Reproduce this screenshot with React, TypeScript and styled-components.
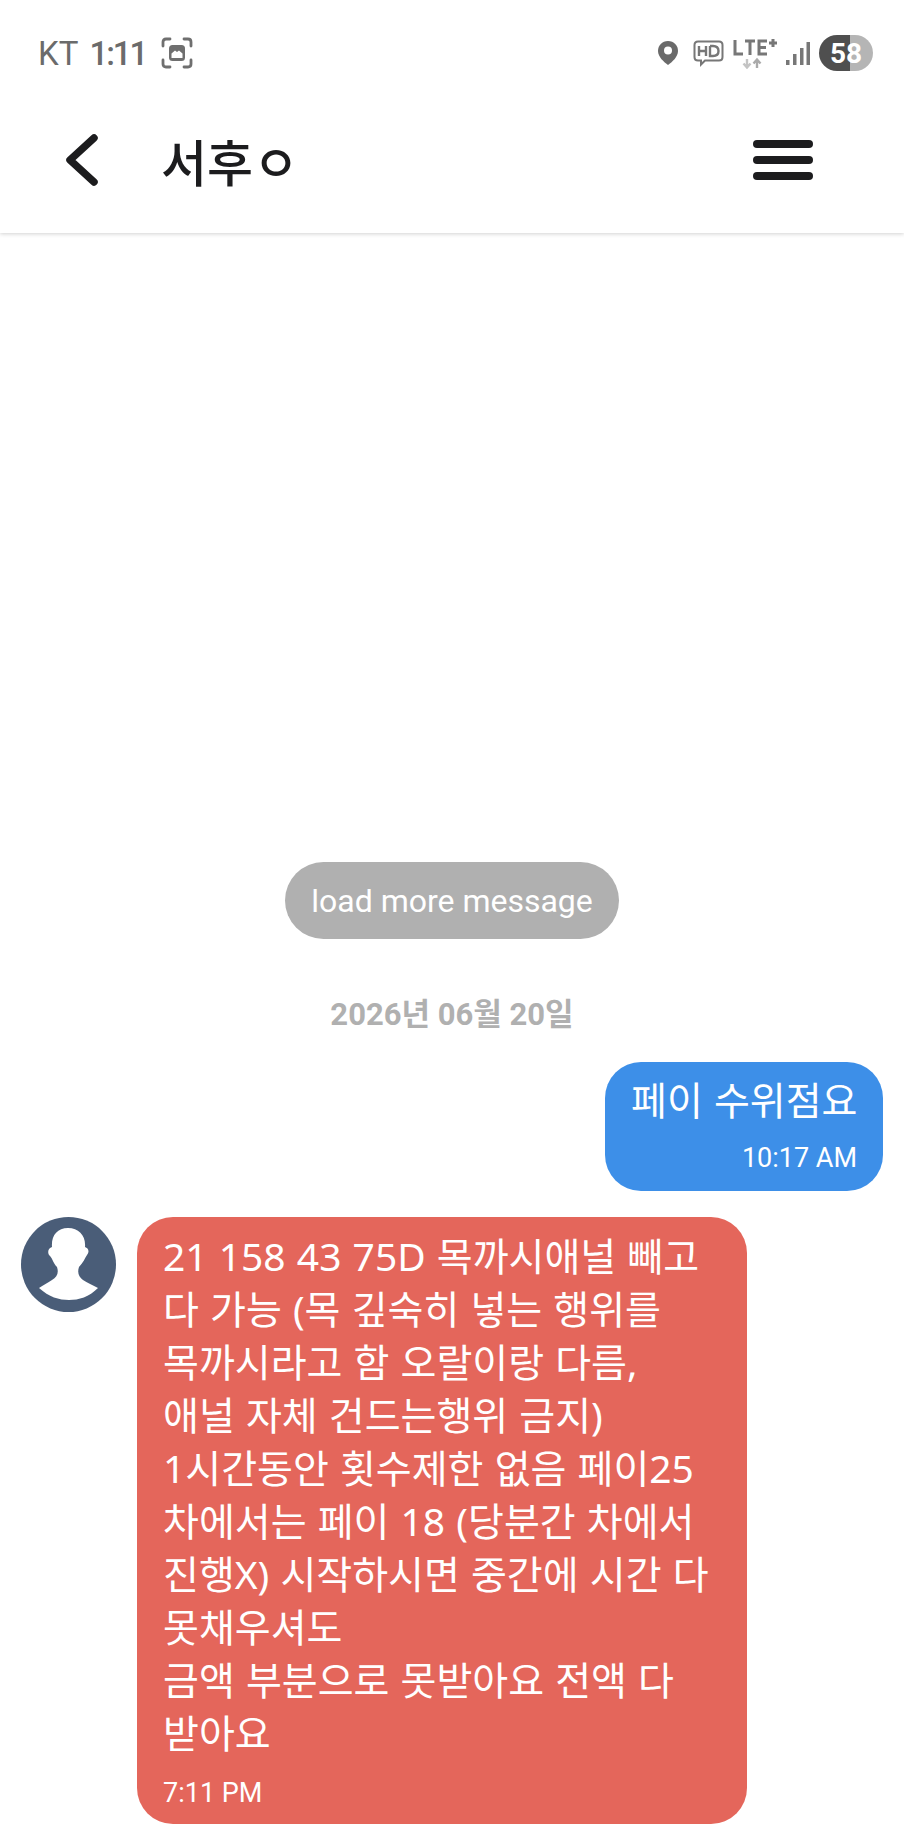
import React from "react";
import styled, { createGlobalStyle } from "styled-components";

const FONT = `Roboto, "Noto Sans CJK KR", sans-serif`;
const BUBBLE_FONT = `"Noto Sans", "Noto Sans CJK KR", sans-serif`;

const receivedLines = [
  "21 158 43 75D 목까시애널 빼고",
  "다 가능 (목 깊숙히 넣는 행위를",
  "목까시라고 함 오랄이랑 다름,",
  "애널 자체 건드는행위 금지)",
  "1시간동안 횟수제한 없음 페이25",
  "차에서는 페이 18 (당분간 차에서",
  "진행X) 시작하시면 중간에 시간 다",
  "못채우셔도",
  "금액 부분으로 못받아요 전액 다",
  "받아요",
];

export default function App() {
  return (
    <>
      <GlobalStyle />
      <Screen>
        <TopArea>
          <StatusBar>
            <StatusLeft>
              <Carrier>KT</Carrier>
              <Clock>1:11</Clock>
              <CaptureIcon />
            </StatusLeft>
            <StatusRight>
              <PinSlot>
                <PinIcon />
              </PinSlot>
              <HdIcon />
              <LteIcon />
              <SignalIcon />
              <Battery>
                <BatteryLevel>58</BatteryLevel>
              </Battery>
            </StatusRight>
          </StatusBar>
          <Header>
            <BackButton>
              <svg width="36" height="54" viewBox="0 0 36 54">
                <path
                  d="M30 5 L6 27 L30 49"
                  fill="none"
                  stroke="#1c1c1e"
                  strokeWidth="7.5"
                  strokeLinecap="round"
                  strokeLinejoin="round"
                />
              </svg>
            </BackButton>
            <Title>서후ㅇ</Title>
            <MenuButton>
              <MenuBar />
              <MenuBar />
              <MenuBar />
            </MenuButton>
          </Header>
        </TopArea>
        <MessageArea>
          <LoadMore>load more message</LoadMore>
          <DateLabel>2026년 06월 20일</DateLabel>
          <SentRow>
            <SentBubble>
              <SentText>페이 수위점요</SentText>
              <SentTime>10:17 AM</SentTime>
            </SentBubble>
          </SentRow>
          <ReceivedRow>
            <Avatar>
              <svg width="95" height="95" viewBox="0 0 95 95">
                <circle cx="47.5" cy="47.5" r="47.5" fill="#4a5d78" />
                <path
                  d="M47 11 C36 11 30 19 31 30 C28 31 26 34 28 38 C31 40 32 46 36 50 C38 56 36 60 31 63 C27 66 22 68 18 71 C28 80 38 83 48 83 C58 83 68 80 77 71 C72 68 66 66 62 63 C58 60 56 56 58 50 C62 46 64 41 66 38 C69 34 67 31 64 30 C65 19 58 11 47 11 Z"
                  fill="#ffffff"
                />
              </svg>
            </Avatar>
            <ReceivedBubble>
              <ReceivedText>
                {receivedLines.map((line) => (
                  <div key={line}>{line}</div>
                ))}
              </ReceivedText>
              <ReceivedTime>7:11 PM</ReceivedTime>
            </ReceivedBubble>
          </ReceivedRow>
        </MessageArea>
      </Screen>
    </>
  );
}

function CaptureIcon() {
  return (
    <svg width="32" height="32" viewBox="0 0 32 32" fill="none">
      <path
        d="M2 9 V5 Q2 2 5 2 H9 M23 2 H27 Q30 2 30 5 V9 M30 23 V27 Q30 30 27 30 H23 M9 30 H5 Q2 30 2 27 V23"
        stroke="#6f6f6f"
        strokeWidth="2.8"
        strokeLinecap="round"
      />
      <rect x="8" y="8" width="16" height="16" rx="3.5" fill="#6f6f6f" />
      <path d="M10.500 21 V16.500 L14 13.500 L16 15 L18 13.500 L21.500 16.500 V21 Z" fill="#ffffff" />
    </svg>
  );
}

function PinIcon() {
  return (
    <svg width="22" height="26" viewBox="0 0 22 26">
      <path
        d="M11 1 C5 1 1 5.5 1 11 C1 17 7 22 11 25 C15 22 21 17 21 11 C21 5.5 17 1 11 1 Z"
        fill="#6a6a6a"
      />
      <circle cx="11" cy="10.5" r="4" fill="#ffffff" />
    </svg>
  );
}

function HdIcon() {
  return (
    <svg width="31" height="27" viewBox="0 0 31 27" fill="none">
      <path
        d="M5 1.500 H26 Q29.500 1.500 29.500 5 V17 Q29.500 20.500 26 20.500 H12 L8 24.500 V20.500 H5 Q1.500 20.500 1.500 17 V5 Q1.500 1.500 5 1.500 Z"
        stroke="#777"
        strokeWidth="2"
      />
      <path
        d="M6 6 V16 M13 6 V16 M6 11 H13 M17 6 V16 H20 Q25.500 16 25.500 11 Q25.500 6 20 6 H17"
        stroke="#777"
        strokeWidth="2.4"
      />
    </svg>
  );
}

function LteIcon() {
  return (
    <svg width="44" height="32" viewBox="0 0 44 32" fill="none">
      <path
        d="M2 3 V17 H10 M12 4 H22 M17 4 V18 M34 4 H26 V17 H34 M26 10.500 H33 M36 6 H44 M40 2 V10"
        stroke="#777"
        strokeWidth="3"
      />
      <path d="M14 22 V30 M10.500 26.500 L14 30.500 L17.500 26.500" stroke="#c4c4c4" strokeWidth="2.4" />
      <path d="M24 31 V23 M20.500 26.500 L24 22.500 L27.500 26.500" stroke="#aaaaaa" strokeWidth="2.4" />
    </svg>
  );
}

function SignalIcon() {
  return (
    <svg width="24" height="25" viewBox="0 0 24 25">
      <rect x="0" y="19" width="3.5" height="5" fill="#777" />
      <rect x="7" y="13" width="3.5" height="11" fill="#777" />
      <rect x="14" y="7" width="3.5" height="17" fill="#777" />
      <rect x="20.500" y="1" width="3.5" height="23" fill="#777" />
    </svg>
  );
}

const GlobalStyle = createGlobalStyle`
  html, body {
    margin: 0;
    padding: 0;
    background: #ffffff;
  }
  body {
    font-family: ${FONT};
  }
`;

const Screen = styled.div`
  width: 904px;
  height: 1838px;
  overflow: hidden;
  display: flex;
  flex-direction: column;
  background: #ffffff;
`;

const TopArea = styled.div`
  height: 233px;
  flex: none;
  display: flex;
  flex-direction: column;
  box-shadow: 0 1px 4px rgba(0, 0, 0, 0.18);
`;

const StatusBar = styled.div`
  height: 106px;
  padding: 0 31px 0 38px;
  display: flex;
  align-items: center;
  justify-content: space-between;
`;

const StatusLeft = styled.div`
  display: flex;
  align-items: center;
  color: #6b6b6b;
  font-size: 33px;
`;

const Carrier = styled.span`
  margin-right: 11px;
`;

const Clock = styled.span`
  font-weight: 500;
  letter-spacing: -2px;
  margin-right: 15px;
`;

const StatusRight = styled.div`
  display: flex;
  align-items: center;
  gap: 9px;
`;

const PinSlot = styled.div`
  display: flex;
  margin-right: 5px;
`;

const Battery = styled.div`
  width: 54px;
  height: 36px;
  border-radius: 18px;
  display: flex;
  align-items: center;
  justify-content: center;
  background: linear-gradient(to right, #4f4f4f 0 57%, #b5b5b5 57% 100%);
`;

const BatteryLevel = styled.span`
  color: #ffffff;
  font-size: 28px;
  font-weight: 700;
`;

const Header = styled.header`
  flex: 1;
  padding: 0 91px 19px 64px;
  display: flex;
  align-items: center;
`;

const BackButton = styled.div`
  width: 36px;
  height: 54px;
  margin-right: 61px;
`;

const Title = styled.h1`
  flex: 1;
  margin: 0;
  color: #1c1c1e;
  font-size: 50px;
  font-weight: 500;
`;

const MenuButton = styled.div`
  width: 60px;
  display: flex;
  flex-direction: column;
  gap: 8px;
`;

const MenuBar = styled.div`
  height: 8px;
  border-radius: 4px;
  background: #1c1c1e;
`;

const MessageArea = styled.main`
  flex: 1;
  padding: 629px 21px 0;
  display: flex;
  flex-direction: column;
`;

const LoadMore = styled.div`
  align-self: center;
  width: 334px;
  height: 77px;
  border-radius: 39px;
  background: #b0b0b0;
  color: #ffffff;
  font-size: 32px;
  line-height: 79px;
  text-align: center;
`;

const DateLabel = styled.div`
  margin-top: 58px;
  color: #b0b0b0;
  font-size: 31px;
  font-weight: 700;
  line-height: 36px;
  text-align: center;
`;

const SentRow = styled.div`
  margin-top: 29px;
  display: flex;
  justify-content: flex-end;
`;

const SentBubble = styled.div`
  width: 278px;
  height: 129px;
  box-sizing: border-box;
  padding: 11px 26px 0;
  border-radius: 36px;
  background: #3d8fe8;
  color: #ffffff;
`;

const SentText = styled.div`
  font-family: ${BUBBLE_FONT};
  font-size: 39px;
  line-height: 53px;
  word-spacing: 1px;
  white-space: nowrap;
`;

const SentTime = styled.div`
  margin-top: 16px;
  font-size: 27px;
  line-height: 32px;
  text-align: right;
`;

const ReceivedRow = styled.div`
  margin-top: 26px;
  display: flex;
  align-items: flex-start;
  gap: 21px;
`;

const Avatar = styled.div`
  width: 95px;
  height: 95px;
  flex: none;
`;

const ReceivedBubble = styled.div`
  width: 610px;
  height: 607px;
  box-sizing: border-box;
  padding: 12px 26px 0;
  border-radius: 36px;
  background: #e4665b;
  color: #ffffff;
`;

const ReceivedText = styled.div`
  font-family: ${BUBBLE_FONT};
  font-size: 39px;
  line-height: 53px;
  word-spacing: 1px;
  white-space: nowrap;
`;

const ReceivedTime = styled.div`
  margin-top: 18px;
  font-size: 27px;
  line-height: 32px;
`;
